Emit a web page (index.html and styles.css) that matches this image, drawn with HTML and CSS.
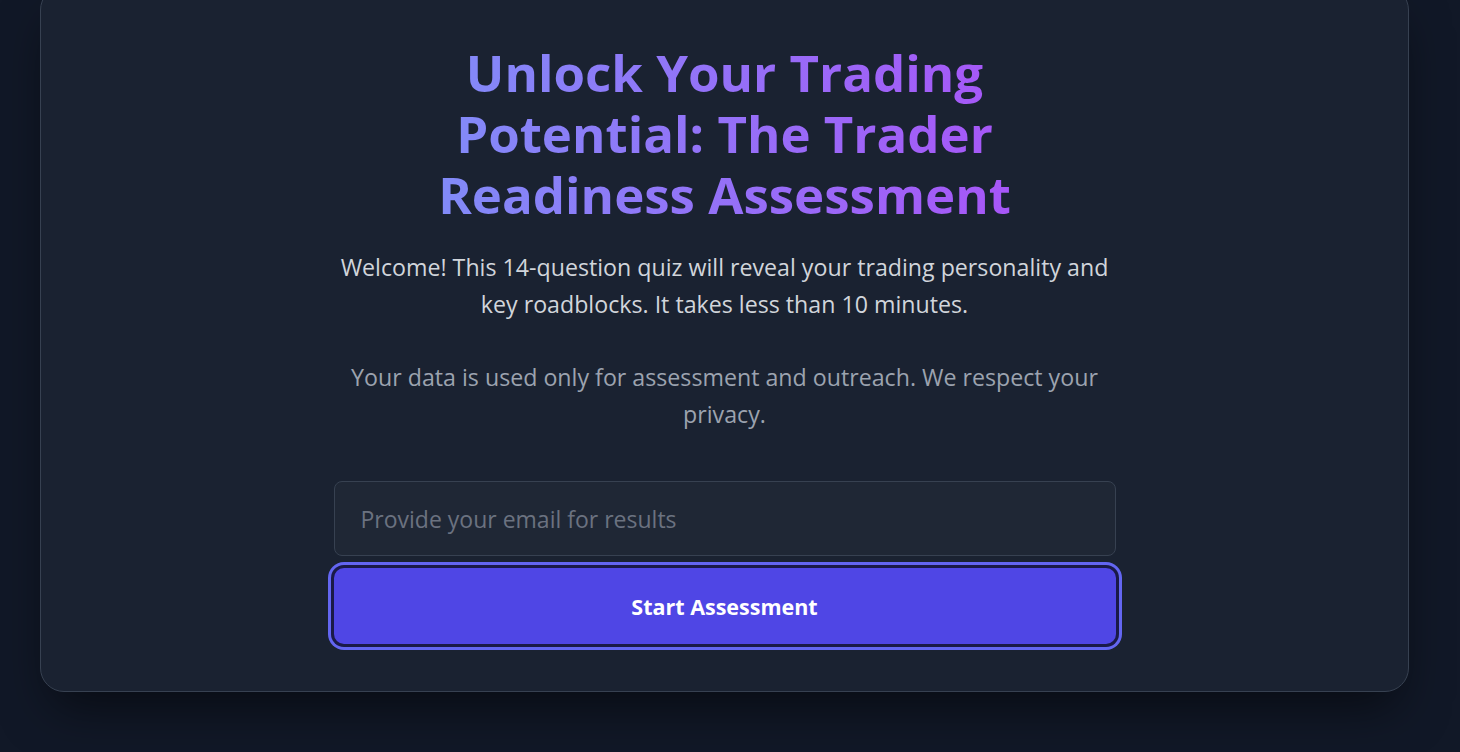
FILE: index.html
```html
<!DOCTYPE html>
<html lang="en">
<head>
<meta charset="utf-8">
<title>Trader Readiness Assessment</title>
<link rel="stylesheet" href="styles.css">
</head>
<body>
<main class="page">
  <section class="card">
    <h1 class="title">Unlock Your Trading Potential: The Trader Readiness Assessment</h1>
    <p class="intro">Welcome! This 14-question quiz will reveal your trading personality and key roadblocks. It takes less than 10 minutes.</p>
    <p class="privacy">Your data is used only for assessment and outreach. We respect your privacy.</p>
    <form class="form">
      <input class="email" type="email" placeholder="Provide your email for results">
      <button class="start" type="button">Start Assessment</button>
    </form>
  </section>
</main>
</body>
</html>
```
FILE: styles.css
```css
* { box-sizing: border-box; }
html, body {
  margin: 0;
  height: 752px;
  overflow: hidden;
  background: #111827;
  font-family: "Open Sans", "Noto Sans", "Liberation Sans", sans-serif;
}
.page {
  padding: 0 51px 0 40px;
}
.card {
  margin-top: -14px;
  background: #1a2231;
  border: 1px solid #374151;
  border-radius: 24px;
  padding: 55px 48px 47px;
  box-shadow: 0 25px 50px -12px rgba(0, 0, 0, 0.55);
  display: flex;
  flex-direction: column;
  align-items: center;
  text-align: center;
}
.title {
  margin: 0;
  max-width: 600px;
  font-size: 51px;
  line-height: 61px;
  font-weight: 700;
  letter-spacing: 0;
  background: linear-gradient(90deg, #818cf8, #a855f7);
  -webkit-background-clip: text;
  background-clip: text;
  color: transparent;
}
.intro, .privacy {
  margin: 0;
  max-width: 782px;
  font-size: 23.2px;
  line-height: 37px;
}
.intro {
  margin-top: 24px;
  color: #d1d5db;
}
.privacy {
  margin-top: 36px;
  color: #9ca3af;
}
.form {
  margin-top: 48px;
  width: 782px;
  display: flex;
  flex-direction: column;
  gap: 12px;
}
.email {
  height: 75px;
  width: 100%;
  background: #1f2735;
  border: 1px solid #374151;
  border-radius: 8px;
  padding: 0 26px;
  font-family: inherit;
  font-size: 23px;
  color: #e5e7eb;
  outline: none;
}
.email::placeholder { color: #6b7280; }
.start {
  height: 76px;
  width: 100%;
  background: #4f46e5;
  border: none;
  border-radius: 10px;
  color: #ffffff;
  font-family: inherit;
  font-size: 21.5px;
  font-weight: 700;
  letter-spacing: 0;
  box-shadow: 0 0 0 3px #1a1a48, 0 0 0 6px #6366f1;
  cursor: pointer;
}
```
